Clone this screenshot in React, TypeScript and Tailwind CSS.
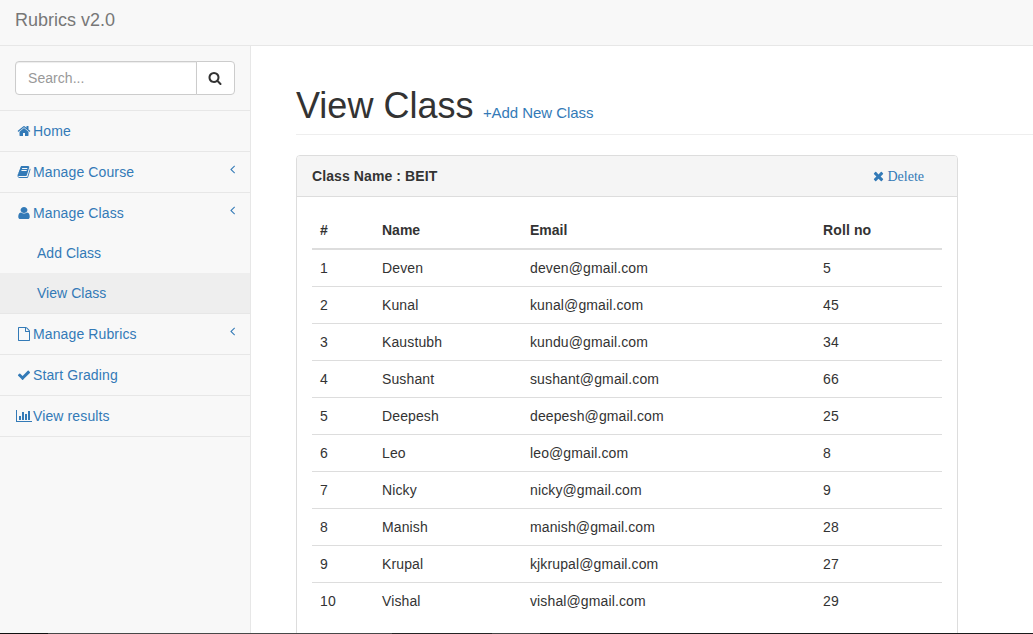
import React from 'react';

const PATHS = {
  home: 'M1472 992v480q0 26-19 45t-45 19h-384v-384h-256v384h-384q-26 0-45-19t-19-45v-480q0-1 .5-3t.5-3l575-474 575 474q1 2 1 6zm223-69l-62 74q-8 9-21 11h-3q-13 0-21-7l-692-577-692 577q-12 8-24 7-13-2-21-11l-62-74q-8-10-7-23.5t11-21.5l719-599q32-26 76-26t76 26l244 204v-195q0-14 9-23t23-9h192q14 0 23 9t9 23v408l219 182q10 8 11 21.5t-7 23.5z',
  search: 'M1216 832q0-185-131.5-316.5t-316.5-131.5-316.5 131.5-131.5 316.5 131.5 316.5 316.5 131.5 316.5-131.5 131.5-316.5zm512 832q0 52-38 90t-90 38q-54 0-90-38l-343-342q-179 124-399 124-143 0-273.5-55.5t-225-150-150-225-55.5-273.5 55.5-273.5 150-225 225-150 273.5-55.5 273.5 55.5 225 150 150 225 55.5 273.5q0 220-124 399l343 343q37 37 37 90z',
  book: 'M1703 478q40 57 18 129l-275 906q-19 64-76.5 107.5t-122.5 43.5h-923q-77 0-148.5-53.5t-99.5-131.5q-24-67-2-127 0-4 3-27t4-37q1-8-3-21.5t-3-19.5q2-11 8-21t16.5-23.5 16.5-23.5q23-38 45-91.5t30-91.5q3-10 .5-30t-.5-28q3-11 17-28t17-23q21-36 42-92t25-90q1-9-2.5-32t.5-28q4-13 22-30.5t22-22.5q19-26 42.5-84.5t27.5-96.5q1-8-3-25.5t-2-26.5q2-8 9-18t18-23 17-21q8-12 16.5-30.5t15-35 16-36 19.5-32 26.5-23.5 36-11.5 47.5 5.5l-1 3q38-9 51-9h761q74 0 114 56t18 130l-274 906q-36 119-71.5 153.5t-128.5 34.5h-869q-27 0-38 15-11 16-1 43 24 70 144 70h923q29 0 56-15.5t35-41.5l300-987q7-22 5-57 38 15 59 43zm-1064 2q-4 13 2 22.5t20 9.5h608q13 0 25.5-9.5t16.5-22.5l21-64q4-13-2-22.5t-20-9.5h-608q-13 0-25.5 9.5t-16.5 22.5zm-83 256q-4 13 2 22.5t20 9.5h608q13 0 25.5-9.5t16.5-22.5l21-64q4-13-2-22.5t-20-9.5h-608q-13 0-25.5 9.5t-16.5 22.5z',
  user: 'M1536 1399q0 109-62.5 187t-150.5 78h-854q-88 0-150.5-78t-62.5-187q0-85 8.5-160.5t31.5-152 58.5-131 94-89 134.5-34.5q131 128 313 128t313-128q76 0 134.5 34.5t94 89 58.5 131 31.5 152 8.5 160.5zm-256-887q0 159-112.5 271.5t-271.5 112.5-271.5-112.5-112.5-271.5 112.5-271.5 271.5-112.5 271.5 112.5 112.5 271.5z',
  file: 'M1596 380q28 28 48 76t20 88v1152q0 40-28 68t-68 28h-1344q-40 0-68-28t-28-68v-1600q0-40 28-68t68-28h896q40 0 88 20t76 48zm-444-244v376h376q-10-29-22-41l-313-313q-12-12-41-22zm384 1528v-1024h-416q-40 0-68-28t-28-68v-416h-768v1536h1280z',
  check: 'M1671 566q0 40-28 68l-724 724-136 136q-28 28-68 28t-68-28l-136-136-362-362q-28-28-28-68t28-68l136-136q28-28 68-28t68 28l294 295 656-657q28-28 68-28t68 28l136 136q28 28 28 68z',
  times: 'M1490 1322q0 40-28 68l-136 136q-28 28-68 28t-68-28l-294-294-294 294q-28 28-68 28t-68-28l-136-136q-28-28-28-68t28-68l294-294-294-294q-28-28-28-68t28-68l136-136q28-28 68-28t68 28l294 294 294-294q28-28 68-28t68 28l136 136q28 28 28 68t-28 68l-294 294 294 294q28 28 28 68z',
  chart: 'M640 896v512h-256v-512h256zm384-512v1024h-256v-1024h256zm1024 1152v128h-2048v-1536h128v1408h1920zm-640-896v768h-256v-768h256zm384-384v1152h-256v-1152h256z',
  angle: 'M1203 544q0 13-10 23l-393 393 393 393q10 10 10 23t-10 23l-50 50q-10 10-23 10t-23-10l-466-466q-10-10-10-23t10-23l466-466q10-10 23-10t23 10l50 50q10 10 10 23z',
};

type IconName = keyof typeof PATHS;

function Icon({ name, className = 'w-[14px]', box = '0 0 1792 1792' }: { name: IconName; className?: string; box?: string }) {
  return (
    <svg viewBox={box} preserveAspectRatio="none" fill="currentColor" aria-hidden="true" className={`h-[14px] shrink-0 ${className}`}>
      <path d={PATHS[name]} />
    </svg>
  );
}

const NAV_BOXES: Partial<Record<IconName, string>> = {
  chart: '0 0 2048 1792',
  user: '112 0 1568 1792',
};

function NavItem({ icon, label, arrow = false, children }: { icon: IconName; label: string; arrow?: boolean; children?: React.ReactNode }) {
  return (
    <li className="border-b border-[#e7e7e7]">
      <a className="flex h-10 items-start px-[15px] py-[10px]">
        <span className="flex h-5 w-[18px] items-center justify-center">
          <Icon name={icon} box={NAV_BOXES[icon]} className={icon === 'chart' ? 'w-4' : 'w-[14px]'} />
        </span>
        <span className="grow">{label}</span>
        {arrow && <Icon name="angle" className="w-[5px]" box="573 0 640 1792" />}
      </a>
      {children}
    </li>
  );
}

const students = [
  ['Deven', 'deven@gmail.com', 5],
  ['Kunal', 'kunal@gmail.com', 45],
  ['Kaustubh', 'kundu@gmail.com', 34],
  ['Sushant', 'sushant@gmail.com', 66],
  ['Deepesh', 'deepesh@gmail.com', 25],
  ['Leo', 'leo@gmail.com', 8],
  ['Nicky', 'nicky@gmail.com', 9],
  ['Manish', 'manish@gmail.com', 28],
  ['Krupal', 'kjkrupal@gmail.com', 27],
  ['Vishal', 'vishal@gmail.com', 29],
];

const COLUMNS = 'grid grid-cols-[62px_148px_293px_127px] *:px-2 *:py-2';

export default function App() {
  return (
    <div className="flex h-[634px] w-[1033px] flex-col overflow-hidden bg-[#f8f8f8] font-['Liberation_Sans',Arial,sans-serif] text-[14px] leading-5 text-[#333]">
      <header className="h-[46px] shrink-0 border-b border-[#e7e7e7] px-[15px] py-[10px] text-[18px] text-[#777]">Rubrics v2.0</header>
      <div className="flex min-h-0 grow">
        <nav className="w-[250px] shrink-0 text-[#337ab7]">
          <div className="flex h-[65px] border-b border-[#e7e7e7] p-[15px]">
            <input
              placeholder="Search..."
              className="h-[34px] w-[182px] rounded-l border border-[#ccc] bg-white px-3 text-[14px] tracking-[0.05px] text-[#555] shadow-[inset_0_1px_1px_rgba(0,0,0,0.075)] placeholder:text-[#999]"
            />
            <button className="-ml-px flex h-[34px] w-[39px] items-center justify-center rounded-r border border-[#ccc] bg-white pr-px text-[#333]">
              <Icon name="search" />
            </button>
          </div>
          <ul className="tracking-[0.12px]">
            <NavItem icon="home" label="Home" />
            <NavItem icon="book" label="Manage Course" arrow />
            <NavItem icon="user" label="Manage Class" arrow>
              <a className="block h-10 py-[10px] pl-[37px] tracking-[0.03px]">Add Class</a>
              <a className="block h-10 bg-[#eee] py-[10px] pl-[37px] tracking-[0.03px]">View Class</a>
            </NavItem>
            <NavItem icon="file" label="Manage Rubrics" arrow />
            <NavItem icon="check" label="Start Grading" />
            <NavItem icon="chart" label="View results" />
          </ul>
        </nav>
        <main className="grow border-l border-[#e7e7e7] bg-white pl-[45px]">
          <div className="flex h-[89px] items-baseline gap-[10px] border-b border-[#eee] pt-[40px]">
            <h1 className="text-[36px] leading-[40px]">View Class</h1>
            <a className="-ml-[0.5px] text-[15px] tracking-[-0.06px] text-[#337ab7]">+Add New Class</a>
          </div>
          <section className="mt-5 h-[520px] w-[662px] rounded border border-[#ddd]">
            <div className="flex h-[41px] items-center justify-between rounded-t-[3px] border-b border-[#ddd] bg-[#f5f5f5] pr-[33px] pl-[15px]">
              <b className="tracking-[0.1px]">Class Name : BEIT</b>
              <a className="flex items-center font-['Liberation_Serif',serif] text-[#337ab7]">
                <Icon name="times" className="mr-[3px] w-[11px]" box="192 0 1408 1792" />
                <span className="pt-[2px] leading-[18px]">Delete</span>
              </a>
            </div>
            <div className="p-[15px] tracking-[0.12px]">
              <div className={`${COLUMNS} border-b-2 border-[#ddd] font-bold`}>
                <span>#</span>
                <span className="tracking-normal">Name</span>
                <span className="tracking-normal">Email</span>
                <span>Roll no</span>
              </div>
              {students.map(([name, email, roll], i) => (
                <div key={name} className={`${COLUMNS} border-[#ddd] not-last:border-b`}>
                  <span>{i + 1}</span>
                  <span>{name}</span>
                  <span>{email}</span>
                  <span>{roll}</span>
                </div>
              ))}
            </div>
          </section>
        </main>
      </div>
      <div className="flex h-px shrink-0 bg-[#1a1a1a]">
        <div className="w-12 bg-[#111]" />
        <div className="w-[344px] bg-[#484848]" />
        <div className="w-[100px] bg-[#242424]" />
        <div className="w-[48px] bg-[#444]" />
      </div>
    </div>
  );
}
